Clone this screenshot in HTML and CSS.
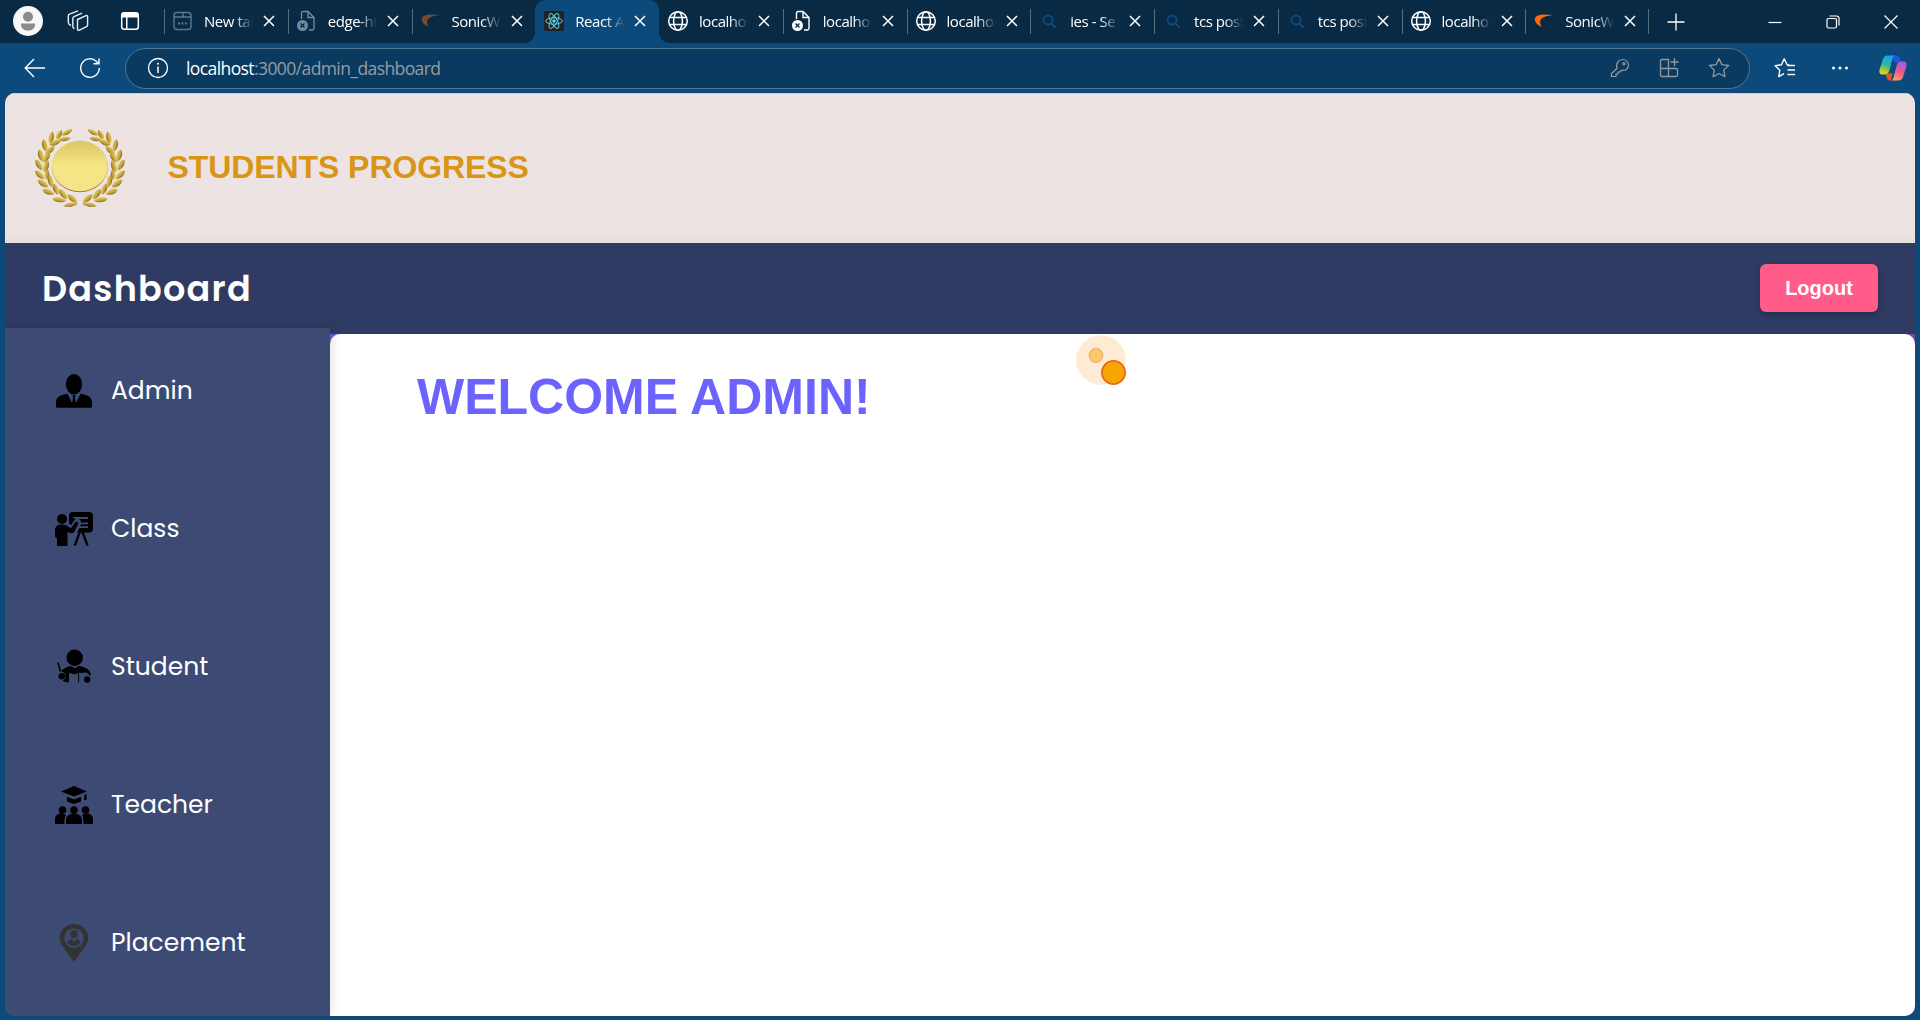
FILE: index.html
```html
<!DOCTYPE html>
<html lang="en">
<head>
<meta charset="utf-8">
<title>React App</title>
<link rel="stylesheet" href="styles.css">
</head>
<body>
<svg class="defs" width="0" height="0" aria-hidden="true">
  <defs>
    <symbol id="x" viewBox="0 0 12 12"><path d="M1 1l10 10M11 1L1 11" fill="none" stroke="#fff" stroke-width="1.5"/></symbol>
    <symbol id="globe" viewBox="0 0 22 22"><g fill="none" stroke="#fff" stroke-width="1.5"><circle cx="11" cy="11" r="9.3"/><ellipse cx="11" cy="11" rx="4.4" ry="9.3"/><path d="M2.6 7.6h16.8M2.6 14.4h16.8"/></g></symbol>
    <symbol id="filex" viewBox="0 0 22 22"><path d="M5.5 9V3.2A1.7 1.7 0 0 1 7.200 1.500H12l6 6v10.800a1.700 1.700 0 0 1-1.700 1.700H13M12 1.500V7.500h6" fill="none" stroke="currentColor" stroke-width="1.4"/><circle cx="6.500" cy="15.500" r="5.500" fill="currentColor"/><path d="M4.500 13.500l4 4M8.500 13.500l-4 4" stroke="#082a45" stroke-width="1.300"/></symbol>
    <symbol id="search" viewBox="0 0 22 22"><circle cx="10" cy="10" r="4.500" fill="none" stroke="#0e4a82" stroke-width="1.800"/><path d="M13.500 13.500l4 4" stroke="#0e4a82" stroke-width="2"/></symbol>
    <symbol id="sonic" viewBox="0 0 22 22"><path d="M8.500 17C4.500 15 1.500 12 1.800 9 2.200 5.500 7 4.500 11 4.500c3 0 6 .2 9 .5-5 1-11 1.500-12.500 5C6.700 12.300 7.300 14.500 8.500 17z" fill="currentColor"/></symbol>
    <symbol id="newtab" viewBox="0 0 22 22"><g fill="none" stroke="#5c788d" stroke-width="1.400"><rect x="2" y="2.500" width="17" height="17" rx="3"/><path d="M2 7h17M11 2.500v3a1.500 1.500 0 0 0 1.500 1.500"/></g><path d="M6 13.500h2m1.500 0h2m1.500 0h2" stroke="#5c788d" stroke-width="1.800"/></symbol>
    <symbol id="react" viewBox="0 0 22 22"><rect x="1" y="1" width="20" height="20" rx="2" fill="#222"/><g fill="none" stroke="#5bcbe8" stroke-width="1"><ellipse cx="11" cy="11" rx="8.300" ry="3.200"/><ellipse cx="11" cy="11" rx="8.300" ry="3.200" transform="rotate(60 11 11)"/><ellipse cx="11" cy="11" rx="8.300" ry="3.200" transform="rotate(120 11 11)"/></g><circle cx="11" cy="11" r="1.700" fill="#61dafb"/></symbol>
    <linearGradient id="leafGold" x1="0" y1="0" x2="0" y2="1"><stop offset="0" stop-color="#e3cd55"/><stop offset=".6" stop-color="#c2a238"/><stop offset="1" stop-color="#866420"/></linearGradient>
    <linearGradient id="discGold" x1="0" y1="0" x2="0" y2="1"><stop offset="0" stop-color="#dcc664"/><stop offset=".5" stop-color="#f5e685"/><stop offset="1" stop-color="#f3e588"/></linearGradient>
    <path id="leaf" d="M-19 0C-11-11 8-11 19 0 8 10-11 10-19 0z" fill="url(#leafGold)"/>
    <g id="branch">
      <use href="#leaf" transform="translate(112 37) rotate(-28) scale(.95 .8)"/>
      <use href="#leaf" transform="translate(88 43) rotate(-60) scale(.85 .9)"/>
      <use href="#leaf" transform="translate(104 57) rotate(-8) scale(.95 .8)"/>
      <use href="#leaf" transform="translate(64 52) rotate(-78)"/>
      <use href="#leaf" transform="translate(76 68) rotate(-22)"/>
      <use href="#leaf" transform="translate(44 76) rotate(78)"/>
      <use href="#leaf" transform="translate(60 91) rotate(-42) scale(.95 1)"/>
      <use href="#leaf" transform="translate(32 107) rotate(75)"/>
      <use href="#leaf" transform="translate(50 112) rotate(-60)"/>
      <use href="#leaf" transform="translate(27 135) rotate(58)"/>
      <use href="#leaf" transform="translate(49 139) rotate(-72)"/>
      <use href="#leaf" transform="translate(29 165) rotate(44)"/>
      <use href="#leaf" transform="translate(51 163) rotate(-85) scale(.8 .9)"/>
      <use href="#leaf" transform="translate(39 191) rotate(34)"/>
      <use href="#leaf" transform="translate(61 183) rotate(78)"/>
      <use href="#leaf" transform="translate(55 216) rotate(20)"/>
      <use href="#leaf" transform="translate(77 207) rotate(68)"/>
      <use href="#leaf" transform="translate(88 240) rotate(8) scale(1.100 .9)"/>
      <use href="#leaf" transform="translate(99 223) rotate(52)"/>
      <use href="#leaf" transform="translate(127 236) rotate(40)"/>
      <use href="#leaf" transform="translate(122 254) rotate(-8) scale(1.150 .8)"/>
    </g>
  </defs>
</svg>

<header class="tabstrip">
  <div class="strip-tools">
    <svg width="30" height="30" viewBox="0 0 30 30"><circle cx="15" cy="15" r="15" fill="#f7f7f7"/><circle cx="15" cy="10.800" r="5" fill="#8b8b8b"/><path d="M8 17.500h14v1.500c0 3.500-3 5.500-7 5.500s-7-2-7-5.500z" fill="#8b8b8b"/></svg>
    <svg width="22" height="22" viewBox="0 0 22 22" fill="none" stroke="#e8edf1" stroke-width="1.400" stroke-linejoin="round"><path d="M10.500 9.500l8.500-3.800c1-.4 1.600 0 1.600 1v8.300c0 .8-.3 1.300-1 1.600l-7.200 3.600c-1 .5-1.900 0-1.900-1z"/><path d="M7.500 18.500C6 18 5.800 17.500 5.800 16.500V8.500c0-1 .4-1.500 1.200-1.900L15 3.200M4 15.500C2 14.500 1.300 14 1.300 12.500V6c0-1 .4-1.500 1.200-1.900L11 .9"/></svg>
    <svg width="20" height="20" viewBox="0 0 20 20"><rect x="1.700" y="1.700" width="16.600" height="16.600" rx="2.500" fill="none" stroke="#fff" stroke-width="1.500"/><path d="M2 2h16v4.500H2zM6 6h1.500v12H6z" fill="#fff"/></svg>
  </div>
  <nav class="tabs">
    <div class="tab"><svg class="fav"><use href="#newtab"/></svg><span>New tab</span><svg class="close"><use href="#x"/></svg></div>
    <div class="tab"><svg class="fav grey"><use href="#filex"/></svg><span>edge-ht</span><svg class="close"><use href="#x"/></svg></div>
    <div class="tab"><svg class="fav brown"><use href="#sonic"/></svg><span>SonicWa</span><svg class="close"><use href="#x"/></svg></div>
    <div class="tab active"><svg class="fav"><use href="#react"/></svg><span>React Ap</span><svg class="close"><use href="#x"/></svg></div>
    <div class="tab first"><svg class="fav"><use href="#globe"/></svg><span>localhos</span><svg class="close"><use href="#x"/></svg></div>
    <div class="tab"><svg class="fav white"><use href="#filex"/></svg><span>localhos</span><svg class="close"><use href="#x"/></svg></div>
    <div class="tab"><svg class="fav"><use href="#globe"/></svg><span>localhos</span><svg class="close"><use href="#x"/></svg></div>
    <div class="tab"><svg class="fav"><use href="#search"/></svg><span>ies - Se</span><svg class="close"><use href="#x"/></svg></div>
    <div class="tab"><svg class="fav"><use href="#search"/></svg><span>tcs post</span><svg class="close"><use href="#x"/></svg></div>
    <div class="tab"><svg class="fav"><use href="#search"/></svg><span>tcs post</span><svg class="close"><use href="#x"/></svg></div>
    <div class="tab"><svg class="fav"><use href="#globe"/></svg><span>localhos</span><svg class="close"><use href="#x"/></svg></div>
    <div class="tab last"><svg class="fav orange"><use href="#sonic"/></svg><span>SonicWa</span><svg class="close"><use href="#x"/></svg></div>
  </nav>
  <svg class="plus" width="18" height="18" viewBox="0 0 18 18"><path d="M9 .5v17M.5 9h17" stroke="#fff" stroke-width="1.300"/></svg>
  <div class="window-controls">
    <svg width="14" height="14" viewBox="0 0 14 14"><path d="M.5 7.500h13" stroke="#fff" stroke-width="1.200"/></svg>
    <svg width="14" height="14" viewBox="0 0 14 14" fill="none" stroke="#fff" stroke-width="1.200"><rect x="1" y="3.500" width="9.500" height="9.500" rx="1.500"/><path d="M3.500 1h7a2.500 2.500 0 0 1 2.500 2.500v7"/></svg>
    <svg width="14" height="14" viewBox="0 0 14 14"><path d="M.5.5l13 13M13.500.5l-13 13" stroke="#fff" stroke-width="1.200"/></svg>
  </div>
</header>

<div class="toolbar">
  <svg class="back" width="22" height="22" viewBox="0 0 22 22"><path d="M21 11H1.500M10 2L1.200 11l8.800 9" fill="none" stroke="#fff" stroke-width="1.400"/></svg>
  <svg class="reload" width="22" height="22" viewBox="0 0 22 22"><path d="M20.300 11A9.300 9.300 0 1 1 17.500 4.400L19.500 6.500M20 1.500V6.800H14.500" fill="none" stroke="#fff" stroke-width="1.400"/></svg>
  <div class="address">
    <svg width="22" height="22" viewBox="0 0 22 22"><circle cx="11" cy="11" r="9.500" fill="none" stroke="#fff" stroke-width="1.300"/><path d="M11 9.500v6.500" stroke="#fff" stroke-width="1.500"/><circle cx="11" cy="6.800" r="1" fill="#fff"/></svg>
    <p class="url"><b>localhost</b>:3000/admin_dashboard</p>
    <div class="address-icons">
      <svg width="20" height="20" viewBox="0 0 20 20" fill="none" stroke="#929a9f" stroke-width="1.200" stroke-linejoin="round"><path d="M7 10.500C5.500 5 9 1.500 12.500 1.500c3.500 0 6 2.500 6 5.500 0 4-3.500 6-7 5.200L10 14H8v2H6v2.500H1.500v-3z"/><circle cx="14" cy="5.800" r="1.100"/></svg>
      <svg width="20" height="20" viewBox="0 0 20 20" fill="none" stroke="#929a9f" stroke-width="1.300"><path d="M1.500 10.500V3A1.500 1.500 0 0 1 3 1.500h6.500v17H3A1.500 1.500 0 0 1 1.500 17v-6.500H17A1.500 1.500 0 0 1 18.500 12v5a1.500 1.500 0 0 1-1.500 1.500H9.500M15.500 0v8M11.500 4h8"/></svg>
      <svg width="22" height="22" viewBox="0 0 22 22"><path d="M11 1.600l2.900 6 6.600.9-4.800 4.600 1.200 6.600-5.900-3.200-5.900 3.200 1.200-6.600L1.500 8.500l6.600-.9z" fill="none" stroke="#929a9f" stroke-width="1.300" stroke-linejoin="round"/></svg>
    </div>
  </div>
  <div class="toolbar-icons">
    <svg width="22" height="22" viewBox="0 0 22 22"><path d="M15.500 8H13.300L10.200 1.800 7.500 7.800 1.200 8.700l4.600 4.500L4.800 19.600 10 16.700M13.500 8.500h7.500M13.500 13h7.500M13.500 17.500h7.500" fill="none" stroke="#fff" stroke-width="1.400" stroke-linejoin="round"/></svg>
    <svg width="18" height="6" viewBox="0 0 18 6" fill="#fff"><circle cx="2.500" cy="3" r="1.500"/><circle cx="9" cy="3" r="1.500"/><circle cx="15.500" cy="3" r="1.500"/></svg>
    <svg width="28" height="28" viewBox="0 0 28 28">
      <defs>
        <linearGradient id="c1" x1=".6" y1="0" x2=".3" y2="1"><stop offset="0" stop-color="#13a5f0"/><stop offset=".5" stop-color="#2fb6a0"/><stop offset=".75" stop-color="#8fc93d"/><stop offset="1" stop-color="#f5cf18"/></linearGradient>
        <linearGradient id="c2" x1=".6" y1="0" x2=".3" y2="1"><stop offset="0" stop-color="#a259ee"/><stop offset=".5" stop-color="#f0588b"/><stop offset="1" stop-color="#ffa45c"/></linearGradient>
      </defs>
      <path d="M13 1.500h4.500c2 0 2.900 1.200 3.400 3l1.100 4H15z" fill="#1f55d8"/>
      <path d="M6.500 20l7-1-1.500 7.500h-1c-1.800 0-2.700-1.200-3.200-3z" fill="#f0532c"/>
      <path d="M9 1.500h7.500c-2 0-2.600 1.500-3.100 3.500L10.200 17c-.6 2.300-2 3.500-4.200 3.500H3C.5 20.500 0 18 .6 15.500L4 5C4.800 2.500 6.500 1.500 9 1.500z" fill="url(#c1)"/>
      <path d="M19 26.500h-7.500c2 0 2.600-1.500 3.100-3.500L17.800 11c.6-2.300 2-3.500 4.200-3.500h3c2.500 0 3 2.500 2.400 5L24 23c-.8 2.500-2.500 3.500-5 3.500z" fill="url(#c2)"/>
    </svg>
  </div>
</div>

<main class="page">
  <section class="banner">
    <svg class="logo" width="100" height="100" viewBox="0 0 300 300">
      <use href="#branch"/><use href="#branch" transform="translate(300 0) scale(-1 1)"/>
      <ellipse cx="149.500" cy="140.500" rx="84" ry="76" fill="#a07f35"/>
      <ellipse cx="149.500" cy="138" rx="84" ry="75.500" fill="url(#discGold)"/>
    </svg>
    <h1>STUDENTS PROGRESS</h1>
  </section>
  <section class="navbar"><h2>Dashboard</h2><button type="button">Logout</button></section>
  <section class="body">
    <aside class="sidebar">
      <a class="item"><svg viewBox="0 0 38 38"><ellipse cx="19" cy="12.200" rx="8.200" ry="10.200"/><path d="M1 34.500V30c0-5 5-7.500 11.500-8.300L17 31l1.200-5.500-1-2.200h3.600l-1 2.200L21 31l4.500-9.300C32 22.500 37 25 37 30v4.500q0 1.200-1.200 1.200H2.200Q1 35.700 1 34.500z"/></svg><span class="label">Admin</span></a>
      <a class="item"><svg viewBox="0 0 38 38"><circle cx="7" cy="9" r="5"/><path d="M0 20.500c0-4 2.500-6 6-6 4 0 6 .8 8 2.800l2.200.8 4-5.800c1-1.600 3.800 0 3 1.800l-4 7.700c-.7 1.200-2 1.800-3.500 1.400L12.500 22V35c0 .6-.4 1-1 1H3c-.6 0-1-.4-1-1V28.300C.6 28 0 27 0 25.500z"/><path fill-rule="evenodd" d="M17.500 2h17C36.500 2 38 3.500 38 5.500V19c0 2-1.500 3.500-3.500 3.500H22l2.500-4.500H33v-1.700h-7.700l.7-2H33v-1.700h-7c0-2-.8-3-2.500-3.500H33V7H18.500v1.800h3.700c-2 .2-3 1.400-4 3L16 15c-1.200-.4-2-1.500-2-3V5.500C14 3.500 15.500 2 17.500 2z"/><path d="M24.800 22l-5 13.500M27.500 22l5 13.500" stroke="#000" stroke-width="2.300"/></svg><span class="label">Class</span></a>
      <a class="item"><svg viewBox="0 0 38 38"><circle cx="19.700" cy="9.800" r="8.200"/><path d="M3 14.500l2.500 9" stroke="#000" stroke-width="1.600"/><circle cx="6.800" cy="28.300" r="3.300"/><circle cx="32.200" cy="31.500" r="3.200"/><path d="M6 22.800c2-1 4.500-4 10-4.700l3.800 2.200 4-2.200c5.500.5 12 3.500 12.200 9.500l-2.200-.8c-.5-2-3-3-5-2l-5.300.3-4 1.200-4.300-1.200-1.200.5V34.300c-3 0-5.500-.6-6.500-1.500 4-1.200 4.300-7.500 0-8.700z"/><path d="M23.600 25v9.500" stroke="#000" stroke-width="1"/></svg><span class="label">Student</span></a>
      <a class="item"><svg viewBox="0 0 38 38"><path d="M6 5.500L19 0l13 5.500L19 10.500zM12 10.800l7 2.700 7-2.700v4.700l-7 2.500-7-2.500zM29.200 9l2.400-1v6h-2.400z"/><circle cx="7.500" cy="24" r="3.800"/><circle cx="19" cy="24" r="3.800"/><circle cx="30.500" cy="24" r="3.800"/><path d="M0 38v-5c0-3.500 3-5.500 6-5.500 2 0 3.800.6 5 1.800-1.500 2-1.500 4-1.500 8.700zM11 38v-4c0-4 3.500-6.500 8-6.500s8 2.500 8 6.500v4zM28.500 38c0-4.700 0-6.700-1.500-8.700 1.200-1.200 3-1.800 5-1.800 3 0 6 2 6 5.500v5z"/></svg><span class="label">Teacher</span></a>
      <a class="item"><svg viewBox="0 0 38 38" fill="#333"><path fill-rule="evenodd" d="M19 0c8 0 14.200 6.300 14.200 14 0 3-1 5.500-2.700 8L19 38 7.500 22C5.800 19.500 4.800 17 4.800 14 4.800 6.300 11 0 19 0zM19 4.500a9.700 9.700 0 1 0 0 19.400 9.700 9.700 0 0 0 0-19.400z"/><ellipse cx="19" cy="10" rx="3.600" ry="4"/><path d="M12.500 19c0-2.500 2-3.500 4.500-4l2 4 2-4c2.500.5 4.500 1.500 4.500 4-1.500 2-4 3-6.500 3s-5-1-6.500-3z"/></svg><span class="label">Placement</span></a>
    </aside>
    <div class="content"><h1>WELCOME ADMIN!</h1></div>
  </section>
  <svg class="pointer" width="50" height="50" viewBox="0 0 50 50"><circle cx="25" cy="25" r="24.800" fill="#ffebd3"/><circle cx="20" cy="20.500" r="6.700" fill="#fcc967" stroke="#f5b078" stroke-width="1.500"/><circle cx="37.500" cy="37.500" r="11.600" fill="#f7a500" stroke="#eb6719" stroke-width="1.800"/></svg>
</main>
</body>
</html>
```
FILE: styles.css
```css
* { box-sizing: border-box; }
body {
  margin: 0;
  width: 1920px;
  height: 1020px;
  overflow: hidden;
  display: flex;
  flex-direction: column;
  background: #0b4a7a;
  font-family: "Segoe UI", "Open Sans", "Noto Sans", sans-serif;
  color: #fff;
}
svg { display: block; flex: none; }
.defs { position: absolute; }
h1, h2, p { margin: 0; }

/* tab strip */
.tabstrip { height: 43px; flex: none; display: flex; align-items: center; background: #082a45; }
.strip-tools { width: 164px; display: flex; align-items: center; gap: 24px; padding: 0 0 1px 13px; }
.strip-tools svg:last-child { margin-left: 7px; }
.tabs { display: flex; height: 43px; }
.tab { width: 123.75px; height: 43px; display: flex; align-items: center; padding: 0 0 1px 8px; position: relative; }
.tab::before { content: ""; position: absolute; left: 0; top: 9px; width: 1px; height: 25px; background: #55707f; }
.tab.last::after { content: ""; position: absolute; right: 0; top: 9px; width: 1px; height: 25px; background: #55707f; }
.tab.first::before { display: none; }
.tab.active { background: #0b4a7a; border-radius: 10px 10px 0 0; z-index: 1; }
.tab.active::before {
  left: -10px; top: 33px; width: 144px; height: 10px;
  background:
    radial-gradient(circle at 0 0, transparent 9.500px, #0b4a7a 10px) left / 10px 10px no-repeat,
    radial-gradient(circle at 100% 0, transparent 9.500px, #0b4a7a 10px) right / 10px 10px no-repeat;
}
.fav { width: 22px; height: 22px; }
.grey { color: #728a9b; }
.white { color: #fff; }
.brown { color: #794a2b; }
.orange { color: #ff6a0c; }
.tab span {
  width: 49px; margin: 0 0 1px 10px; overflow: hidden; white-space: nowrap;
  font-size: 15px; letter-spacing: -.45px; line-height: 22px;
  -webkit-mask-image: linear-gradient(90deg, #000 62%, transparent);
  mask-image: linear-gradient(90deg, #000 62%, transparent);
}
.close { width: 12px; height: 12px; margin-left: 10px; }
.plus { margin-left: 18px; }
.window-controls { margin-left: auto; display: flex; gap: 44px; padding-right: 22px; }

/* toolbar */
.toolbar { height: 50px; flex: none; display: flex; align-items: center; padding-left: 24px; }
.reload { margin-left: 33px; }
.address {
  width: 1625px; height: 41px; margin-left: 24px; padding: 0 19px 0 21px;
  display: flex; align-items: center; border: 1px solid #527792; border-radius: 21px; background: #0a3a5f;
}
.url { margin: 0 0 1px 17px; font-size: 17.500px; letter-spacing: -.590px; color: #969ea3; }
.url b { font-weight: 400; color: #fff; }
.address-icons { margin-left: auto; display: flex; align-items: center; gap: 29px; }
.toolbar-icons { display: flex; align-items: center; margin-left: 24px; gap: 36px; }
.toolbar-icons svg:nth-child(2) { margin: 0 -6px 0 -1px; }

/* web page */
.page {
  width: 1910px; height: 923px; margin-left: 5px; position: relative;
  display: flex; flex-direction: column; overflow: hidden; border-radius: 10px;
  background: linear-gradient(90deg, #6366d1, #764ba2);
}
.banner {
  height: 150px; flex: none; display: flex; align-items: center; padding-left: 25px;
  background: linear-gradient(#ece3e2 94%, #e6dedb); box-shadow: inset 0 1px #cbd0dc;
}
.logo { margin-top: 4px; }
.banner h1 { margin: 0 0 1px 37.500px; font: bold 32px "Liberation Sans", Arial, sans-serif; letter-spacing: -.080px; color: #d99516; }
.navbar {
  height: 91px; flex: none; display: flex; align-items: flex-start; justify-content: space-between;
  padding: 21px 37px 0 37px; background: #2f3b63;
}
.navbar h2 { font: 600 35px/50px "Poppins", "Inter", sans-serif; letter-spacing: 1.250px; }
.navbar button {
  width: 118px; height: 48px; border: 0; border-radius: 6px; background: #ff5c8a; color: #fff;
  font: bold 20px "Liberation Sans", Arial, sans-serif; box-shadow: 0 3px 6px rgba(0, 0, 0, .25);
}
.body { flex: 1; display: flex; min-height: 0; }
.sidebar {
  width: 325px; margin-top: -6px; padding: 44px 0 0 50px; display: flex; flex-direction: column; gap: 100px;
  background: #3c4a74; box-shadow: 0 0 12px rgba(0, 0, 0, .15); z-index: 1;
}
.item { display: flex; align-items: center; gap: 18px; height: 38px; }
.item svg { width: 38px; height: 38px; }
.label { font: 400 25px/38px "Poppins", "Inter", sans-serif; }
.content { flex: 1; background: #fff; border-radius: 10px 10px 0 0; padding: 34px 0 0 87px; }
.content h1 { font: bold 50px/58px "Liberation Sans", Arial, sans-serif; color: #6c63ff; }
.pointer { position: absolute; left: 1071px; top: 242px; }
```
